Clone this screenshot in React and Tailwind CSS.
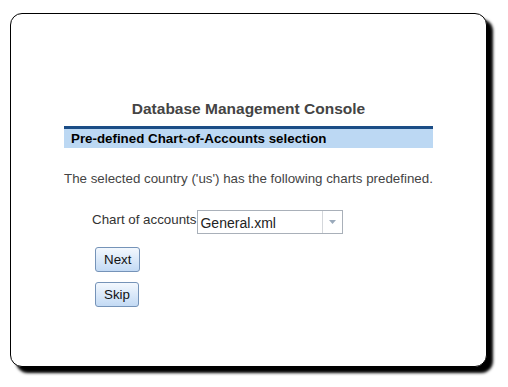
import React from 'react';

function Button({ children }) {
  return (
    <button className="h-[25px] px-[8px] rounded-[3px] border border-[#7593b8] bg-gradient-to-b from-[#f3f8fe] to-[#c3daf4] text-[13.33px] text-[#111] leading-none">
      {children}
    </button>
  );
}

export default function App() {
  return (
    <div className="w-[508px] h-[387px] bg-white pt-[13px] pl-[10px] font-['Liberation_Sans',Arial,sans-serif]">
      <div className="w-[477px] h-[354px] bg-white border border-black rounded-[12px] shadow-[6px_6px_3px_#000] pt-[86px] flex flex-col items-center">
        <h1 className="text-[15.5px] leading-[18px] font-bold text-[#444]">Database Management Console</h1>

        <div className="w-[369px] mt-[8px]">
          {/* Section header */}
          <div className="border-t-[3px] border-[#1b4d86] bg-[#bcd8f3] h-[22px] pl-[7px] flex items-center">
            <span className="text-[13.33px] font-bold text-black">Pre-defined Chart-of-Accounts selection</span>
          </div>

          <p className="mt-[23px] text-[13.33px] leading-[16px] text-[#444]">
            The selected country ('us') has the following charts predefined.
          </p>

          <div className="mt-[23px] pl-[28px] flex items-start">
            <span className="text-[13.33px] leading-[16px] text-[#333] mt-[2px]">Chart of accounts</span>
            <div className="ml-[1px] w-[146px] h-[24px] border border-[#a9b0b9] bg-white flex">
              <span className="flex-1 pl-[2px] pt-[1px] text-[14px] leading-[22px] text-[#222]">General.xml</span>
              <div className="w-[20px] border-l border-[#d4d7db] flex items-center justify-center">
                <svg width="7" height="4" viewBox="0 0 7 4">
                  <path d="M0 0h7L3.5 4z" fill="#9aaabb" />
                </svg>
              </div>
            </div>
          </div>

          <div className="mt-[13px] pl-[31px] flex flex-col items-start gap-[10px]">
            <Button>Next</Button>
            <Button>Skip</Button>
          </div>
        </div>
      </div>
    </div>
  );
}
